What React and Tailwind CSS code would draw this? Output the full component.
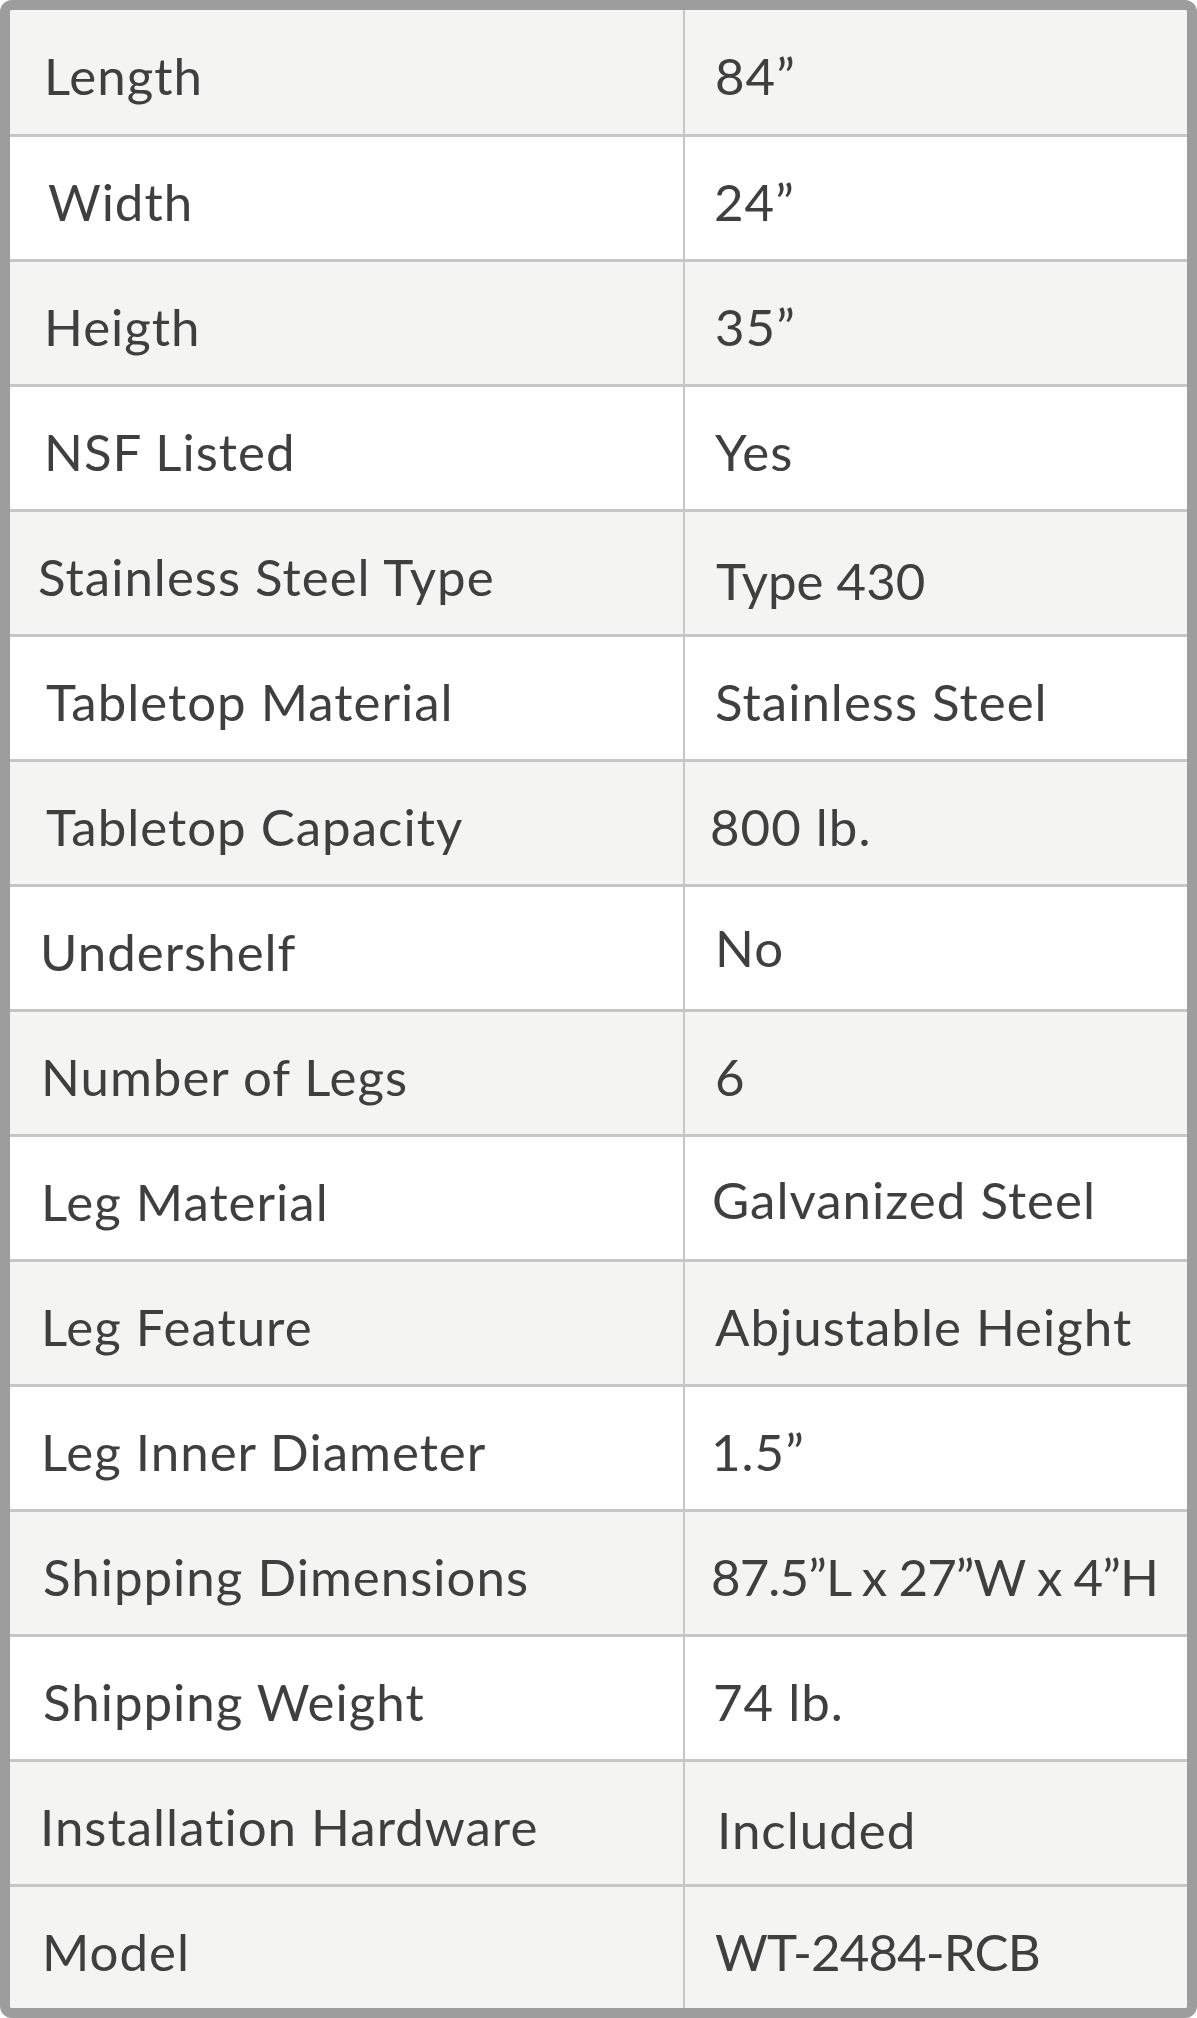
import React from "react";

const specs = [
  { label: "Length", value: "84\u201D", lp: 34, vp: 30, bg: "grey" },
  { label: "Width", value: "24\u201D", lp: 38, vp: 29, bg: "white" },
  { label: "Heigth", value: "35\u201D", lp: 34, vp: 30, bg: "grey" },
  { label: "NSF Listed", value: "Yes", lp: 34, vp: 30, bg: "white" },
  { label: "Stainless Steel Type", value: "Type 430", lp: 28, vp: 31, bg: "grey", vy: 4, tight: true },
  { label: "Tabletop Material", value: "Stainless Steel", lp: 36, vp: 30, bg: "white" },
  { label: "Tabletop Capacity", value: "800 lb.", lp: 36, vp: 25, bg: "grey" },
  { label: "Undershelf", value: "No", lp: 30, vp: 30, bg: "white", vy: -8 },
  { label: "Number of Legs", value: "6", lp: 31, vp: 30, bg: "grey" },
  { label: "Leg Material", value: "Galvanized Steel", lp: 31, vp: 27, bg: "white", vy: -2 },
  { label: "Leg Feature", value: "Abjustable Height", lp: 31, vp: 30, bg: "grey" },
  { label: "Leg Inner Diameter", value: "1.5\u201D", lp: 31, vp: 26, bg: "white" },
  { label: "Shipping Dimensions", value: "87.5\u201DL x 27\u201DW x 4\u201DH", lp: 33, vp: 26, bg: "grey", tighter: true },
  { label: "Shipping Weight", value: "74 lb.", lp: 33, vp: 28, bg: "white" },
  { label: "Installation Hardware", value: "Included", lp: 30, vp: 32, bg: "grey", vy: 3 },
  { label: "Model", value: "WT-2484-RCB", lp: 32, vp: 30, bg: "grey", tighter: true },
];

function SpecRow({ row, first }) {
  return (
    <div
      className={
        "flex " +
        (row.bg === "grey" ? "bg-[#f4f4f3] " : "bg-white ") +
        (first ? "h-[124px]" : "h-[125px] border-t-[3px] border-[#c6c6c6]")
      }
    >
      <div
        className="w-[673px] flex items-center pt-[8px]"
        style={{ paddingLeft: row.lp }}
      >
        {row.label}
      </div>
      <div
        className={
          "flex-1 flex items-center border-l-2 border-[#c6c6c6] " +
          (row.tighter ? "tracking-[-0.9px]" : row.tight ? "tracking-[0px]" : "")
        }
        style={{ paddingLeft: row.vp, paddingTop: 8 + (row.vy || 0) * 2 }}
      >
        {row.value}
      </div>
    </div>
  );
}

export default function App() {
  return (
    <div className="w-[1197px] h-[2018px] bg-white">
      <div className="h-full border-[10px] border-[#9e9d9d] rounded-[12px] overflow-hidden bg-[#f4f4f3] font-['Lato',sans-serif] text-[51px] text-[#3f3f3f] tracking-[1px]">
        {specs.map((row, i) => (
          <SpecRow key={row.label} row={row} first={i === 0} />
        ))}
      </div>
    </div>
  );
}
